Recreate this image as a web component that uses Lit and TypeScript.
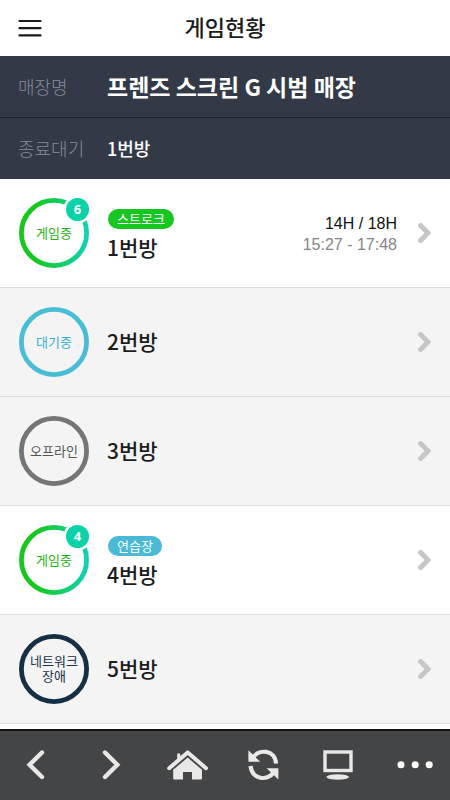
import { LitElement, html, css, svg, nothing } from "lit";
import { customElement, property } from "lit/decorators.js";
import { classMap } from "lit/directives/class-map.js";

type Status = "playing" | "waiting" | "offline" | "fault";

interface Room {
  name: string;
  status: Status;
  label: string;
  players?: number;
  mode?: { text: string; kind: "stroke" | "practice" };
  holes?: string;
  time?: string;
}

const ROOMS: Room[] = [
  {
    name: "1번방",
    status: "playing",
    label: "게임중",
    players: 6,
    mode: { text: "스트로크", kind: "stroke" },
    holes: "14H / 18H",
    time: "15:27 - 17:48",
  },
  { name: "2번방", status: "waiting", label: "대기중" },
  { name: "3번방", status: "offline", label: "오프라인" },
  {
    name: "4번방",
    status: "playing",
    label: "게임중",
    players: 4,
    mode: { text: "연습장", kind: "practice" },
  },
  { name: "5번방", status: "fault", label: "네트워크 장애" },
];

@customElement("status-ring")
export class StatusRing extends LitElement {
  @property({ attribute: false }) room!: Room;

  static styles = css`
    :host {
      display: block;
      flex: none;
    }
    .ring {
      position: relative;
      display: grid;
      place-items: center;
      box-sizing: border-box;
      width: 70px;
      height: 70px;
      padding: 0 8px 2px;
    }
    .circle {
      position: absolute;
      inset: 0;
      overflow: visible;
    }
    .text {
      font-size: 13px;
      line-height: 15px;
      text-align: center;
      word-break: keep-all;
    }
    .playing {
      color: #19b414;
    }
    .waiting {
      color: #36b0ca;
    }
    .offline {
      color: #555;
    }
    .fault {
      color: #1b3048;
    }
    .count {
      position: absolute;
      top: 0;
      right: 0;
      width: 23px;
      height: 23px;
      border-radius: 50%;
      background: #09d1a8;
      color: #fff;
      font: bold 13px/23px "Open Sans", "Liberation Sans", sans-serif;
      text-align: center;
    }
  `;

  private circle() {
    const { status } = this.room;
    if (status === "playing") {
      return svg`
        <defs>
          <linearGradient id="g" x1="0" y1="0" x2="1" y2="0">
            <stop offset="0.2" stop-color="#14c81c" />
            <stop offset="1" stop-color="#10d3b0" />
          </linearGradient>
          <mask id="m">
            <rect width="70" height="70" fill="#fff" />
            <circle cx="58.5" cy="11.5" r="14" fill="#000" />
          </mask>
        </defs>
        <g mask="url(#m)">
          <circle cx="35" cy="35" r="32.6" fill="none" stroke="url(#g)" stroke-width="4.8" />
        </g>`;
    }
    const stroke = { waiting: "#49bdd6", offline: "#757575", fault: "#162f45" }[status];
    return svg`<circle cx="35" cy="35" r="32.6" fill="none" stroke=${stroke} stroke-width="4.8" />`;
  }

  render() {
    const { status, label, players } = this.room;
    return html`
      <div class="ring">
        <svg class="circle" width="70" height="70" viewBox="0 0 70 70" aria-hidden="true">
          ${this.circle()}
        </svg>
        <span class=${classMap({ text: true, [status]: true })}>${label}</span>
        ${players ? html`<span class="count">${players}</span>` : nothing}
      </div>
    `;
  }
}

@customElement("room-row")
export class RoomRow extends LitElement {
  @property({ attribute: false }) room!: Room;

  static styles = css`
    :host {
      display: block;
    }
    .row {
      display: flex;
      align-items: center;
      box-sizing: border-box;
      min-height: 109px;
      padding: 0 19px;
      border-bottom: 1px solid #dfdfdf;
      background: #f4f4f4;
      color: #1c1c1c;
      text-decoration: none;
    }
    .active {
      background: #fff;
    }
    .info {
      display: flex;
      flex: 1;
      flex-direction: column;
      align-items: flex-start;
      gap: 4px;
      margin-left: 18px;
      padding-bottom: 2px;
    }
    .active .info {
      padding: 4px 0 0;
    }
    .mode {
      margin-left: 1px;
      padding: 0 9px;
      border-radius: 10px;
      color: #fff;
      font-size: 13px;
      line-height: 20px;
    }
    .stroke {
      background: #17c71f;
    }
    .practice {
      background: #49b9d6;
    }
    .name {
      font-size: 21px;
      font-weight: 500;
      line-height: 28px;
    }
    .record {
      padding-top: 2px;
      font: 16px/21px "Liberation Sans", Arial, sans-serif;
      text-align: right;
    }
    .holes {
      color: #111;
    }
    .time {
      color: #858585;
    }
    .arrow {
      flex: none;
      margin-left: 21px;
    }
  `;

  render() {
    const r = this.room;
    return html`
      <a class=${classMap({ row: true, active: r.status === "playing" })} href="#room">
        <status-ring .room=${r}></status-ring>
        <div class="info">
          ${r.mode
            ? html`<span class=${classMap({ mode: true, [r.mode.kind]: true })}>${r.mode.text}</span>`
            : nothing}
          <span class="name">${r.name}</span>
        </div>
        ${r.holes
          ? html`<div class="record">
              <div class="holes">${r.holes}</div>
              <div class="time">${r.time}</div>
            </div>`
          : nothing}
        <svg class="arrow" width="13" height="20" viewBox="0 0 13 20" aria-hidden="true">
          <path
            d="M2.6 2.6 10 10 2.6 17.4"
            fill="none"
            stroke="#c6c6c6"
            stroke-width="5"
            stroke-linecap="round"
            stroke-linejoin="miter"
          />
        </svg>
      </a>
    `;
  }
}

const NAV = [
  {
    label: "뒤로",
    icon: svg`<path d="M29 12.5 16.6 24.7 29 37" fill="none" stroke="#e8e8e8" stroke-width="4.4" stroke-linecap="round" />`,
  },
  {
    label: "앞으로",
    icon: svg`<path d="M17 12.5 29.3 24.7 17 37" fill="none" stroke="#e8e8e8" stroke-width="4.4" stroke-linecap="round" />`,
  },
  {
    label: "홈",
    icon: svg`
      <path d="M14.2 20V13.4h3v4" fill="#e8e8e8" />
      <path d="M6.2 28.2 24.7 12.4 43 28.2" fill="none" stroke="#e8e8e8" stroke-width="4" stroke-linecap="round" stroke-linejoin="round" />
      <path d="M24.7 17.6 39 29.8V38.4a1 1 0 0 1-1 1H29V32H20v7.4H11.2a1 1 0 0 1-1-1V29.8Z" fill="#e8e8e8" />`,
  },
  {
    label: "새로고침",
    icon: svg`
      <path d="M15 17.6C21 8.6 37.2 9.5 38 23.6" fill="none" stroke="#e8e8e8" stroke-width="4.2" />
      <path d="M10.4 10.2V21.8H22.2Z" fill="#e8e8e8" />
      <path d="M12.5 26C14.2 39.8 29.5 41.4 36 32" fill="none" stroke="#e8e8e8" stroke-width="4.2" />
      <path d="M40.4 39.6V28.2H28.6Z" fill="#e8e8e8" />`,
  },
  {
    label: "화면",
    icon: svg`
      <rect x="12" y="12" width="26" height="18.5" fill="none" stroke="#e8e8e8" stroke-width="3.4" />
      <ellipse cx="24.7" cy="37" rx="11.3" ry="2.8" fill="#e8e8e8" />`,
  },
  {
    label: "더보기",
    icon: svg`
      <circle cx="13" cy="24.7" r="3.5" fill="#fff" />
      <circle cx="27.2" cy="24.7" r="3.5" fill="#fff" />
      <circle cx="41.2" cy="24.7" r="3.5" fill="#fff" />`,
  },
];

@customElement("app-root")
export class AppRoot extends LitElement {
  static styles = css`
    :host {
      display: flex;
      flex-direction: column;
      height: 100vh;
      background: #fff;
      color: #1c1c1c;
      font-family: "Noto Sans CJK KR", "Noto Sans", sans-serif;
    }
    .header {
      display: grid;
      flex: none;
      grid-template-columns: 50px 1fr 50px;
      align-items: center;
      height: 56px;
      padding: 0 5px;
    }
    .title {
      grid-column: 2;
      margin: 0;
      padding-bottom: 4px;
      font-size: 22px;
      font-weight: 500;
      line-height: 32px;
      text-align: center;
    }
    .menu,
    .tab {
      display: grid;
      place-items: center;
      padding: 0;
      border: 0;
      background: none;
      cursor: pointer;
    }
    .menu {
      height: 44px;
    }
    .summary {
      flex: none;
      margin: 0;
      background: #333947;
      color: #fff;
    }
    .entry {
      display: grid;
      grid-template-columns: 89px 1fr;
      align-items: center;
      box-sizing: border-box;
      min-height: 61px;
      padding: 0 18px 2px;
    }
    .store {
      min-height: 62px;
      border-bottom: 1px solid #1e2433;
    }
    .key {
      color: #858b98;
      font-size: 18px;
      font-weight: 300;
      line-height: 28px;
    }
    .value {
      margin: 0;
      font-size: 18px;
      font-weight: 500;
      line-height: 28px;
    }
    .store .value {
      font-size: 23px;
      font-weight: 700;
      line-height: 32px;
    }
    .rooms {
      flex: 1;
      min-height: 0;
      overflow: hidden auto;
      margin: 0;
      padding: 0;
      list-style: none;
    }
    .nav {
      display: grid;
      flex: none;
      grid-template-columns: repeat(6, 1fr);
      box-sizing: border-box;
      height: 71px;
      padding-bottom: 2px;
      border-top: 2px solid #111;
      background: #444547;
    }
  `;

  render() {
    return html`
      <header class="header">
        <button class="menu" aria-label="메뉴">
          <svg width="24" height="18" viewBox="0 0 24 18" aria-hidden="true">
            <path d="M1.5 2h21M1.5 9.2h21M1.5 16.4h21" stroke="#1a1a1a" stroke-width="2.2" stroke-linecap="round" />
          </svg>
        </button>
        <h1 class="title">게임현황</h1>
      </header>
      <dl class="summary">
        <div class="entry store">
          <dt class="key">매장명</dt>
          <dd class="value">프렌즈 스크린 G 시범 매장</dd>
        </div>
        <div class="entry">
          <dt class="key">종료대기</dt>
          <dd class="value">1번방</dd>
        </div>
      </dl>
      <ul class="rooms">
        ${ROOMS.map((room) => html`<li><room-row .room=${room}></room-row></li>`)}
      </ul>
      <nav class="nav">
        ${NAV.map(
          (n) => html`<button class="tab" aria-label=${n.label}>
            <svg width="50" height="50" viewBox="0 0 50 50" aria-hidden="true">${n.icon}</svg>
          </button>`
        )}
      </nav>
    `;
  }
}
